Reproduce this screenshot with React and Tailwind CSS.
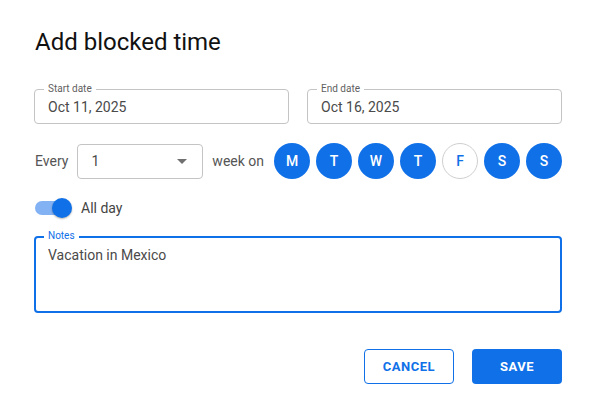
import { useState } from 'react';

const font = { fontFamily: 'Roboto, "Noto Sans", Arial, sans-serif' };

function OutlinedField(props) {
  const { label, value } = props;
  return (
    <div className="relative flex-1 h-[35px] border border-[#c4c4c4] rounded-[4px] flex items-center pl-[13px]">
      <span className="absolute -top-[7px] left-[9px] px-[4px] bg-white text-[10px] leading-[12px] text-[#5f5f5f]">
        {label}
      </span>
      <span className="text-[14px] text-[#4a4a4a] pt-[2px]">{value}</span>
    </div>
  );
}

const days = [
  { d: 'M', on: true },
  { d: 'T', on: true },
  { d: 'W', on: true },
  { d: 'T', on: true },
  { d: 'F', on: false },
  { d: 'S', on: true },
  { d: 'S', on: true },
];

export default function App() {
  const [allDay, setAllDay] = useState(true);
  const [selected, setSelected] = useState(days.map(x => x.on));

  const toggleDay = (i) => {
    const next = [...selected];
    next[i] = !next[i];
    setSelected(next);
  };

  return (
    <div style={font} className="w-[596px] h-[417px] bg-white px-[34px] pt-[27px]">
      <h2 className="text-[24px] leading-[30px] text-[#111] ml-[1px]">Add blocked time</h2>

      <div className="flex gap-[18px] mt-[32px]">
        <OutlinedField label="Start date" value="Oct 11, 2025" />
        <OutlinedField label="End date" value="Oct 16, 2025" />
      </div>

      <div className="flex items-center mt-[19px] h-[36px]">
        <span className="text-[14px] text-[#555] ml-[1px]">Every</span>
        <div className="ml-[9px] w-[126px] h-[35px] border border-[#c4c4c4] rounded-[4px] flex items-center justify-between pl-[13px] pr-[15px]">
          <span className="text-[14px] text-[#4a4a4a]">1</span>
          <svg width="10" height="5" viewBox="0 0 10 5">
            <path d="M0 0 L10 0 L5 5 Z" fill="#707070" />
          </svg>
        </div>
        <span className="text-[14px] text-[#555] ml-[9px]">week on</span>
        <div className="flex gap-[6px] ml-[10px]">
          {days.map((x, i) => (
            <button
              key={i}
              onClick={() => toggleDay(i)}
              className={selected[i]
                ? 'w-[36px] h-[36px] rounded-full bg-[#1070e8] text-white text-[14px] font-medium flex items-center justify-center'
                : 'w-[36px] h-[36px] rounded-full bg-white border border-[#cfcfcf] text-[#1070e8] text-[14px] font-medium flex items-center justify-center'}
            >
              {x.d}
            </button>
          ))}
        </div>
      </div>

      <div className="flex items-center mt-[19px] h-[20px]">
        <button onClick={() => setAllDay(!allDay)} className="relative w-[38px] h-[20px] flex items-center ml-[1px]">
          <span className={allDay ? 'block w-[34px] h-[14px] rounded-full bg-[#82b1f4]' : 'block w-[34px] h-[14px] rounded-full bg-[#bdbdbd]'} />
          <span className={allDay
            ? 'absolute top-0 left-[17px] w-[20px] h-[20px] rounded-full bg-[#1070e8] shadow-[0_1px_2px_rgba(0,0,0,0.3)]'
            : 'absolute top-0 left-0 w-[20px] h-[20px] rounded-full bg-[#fafafa] shadow-[0_1px_2px_rgba(0,0,0,0.3)]'} />
        </button>
        <span className="text-[14px] text-[#444] ml-[8px]">All day</span>
      </div>

      <div className="relative mt-[18px] h-[77px] border-2 border-[#1070e8] rounded-[4px] pl-[12px] pt-[5px]">
        <span className="absolute -top-[8px] left-[8px] px-[4px] bg-white text-[10px] leading-[12px] text-[#1070e8]">
          Notes
        </span>
        <span className="text-[14px] text-[#4a4a4a]">Vacation in Mexico</span>
      </div>

      <div className="flex justify-end gap-[18px] mt-[36px]">
        <button className="w-[90px] h-[35px] border border-[#1070e8] rounded-[4px] text-[#1070e8] text-[13px] font-bold tracking-[0.5px]">
          CANCEL
        </button>
        <button className="w-[90px] h-[35px] rounded-[4px] bg-[#1070e8] text-white text-[13px] font-bold tracking-[0.5px]">
          SAVE
        </button>
      </div>
    </div>
  );
}
